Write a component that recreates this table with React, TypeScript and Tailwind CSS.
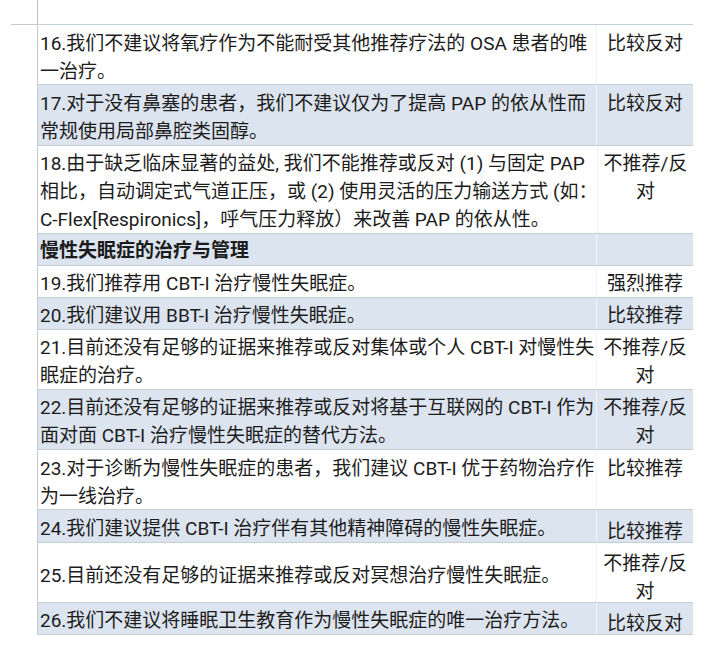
import React from "react";

type Row = {
  lines: string[];
  rec: string[];
  h: string;
  shade?: boolean;
  bold?: boolean;
  pt: string;
  rpt: string;
};

const rows: Row[] = [
  {
    lines: ["16.我们不建议将氧疗作为不能耐受其他推荐疗法的 OSA 患者的唯", "一治疗。"],
    rec: ["比较反对"],
    h: "h-[60px]",
    pt: "pt-[5px]",
    rpt: "pt-[5px]",
  },
  {
    lines: ["17.对于没有鼻塞的患者，我们不建议仅为了提高 PAP 的依从性而", "常规使用局部鼻腔类固醇。"],
    rec: ["比较反对"],
    h: "h-[61px]",
    shade: true,
    pt: "pt-[5px]",
    rpt: "pt-[5px]",
  },
  {
    lines: [
      "18.由于缺乏临床显著的益处, 我们不能推荐或反对 (1) 与固定 PAP",
      "相比，自动调定式气道正压，或 (2) 使用灵活的压力输送方式 (如：",
      "C-Flex[Respironics]，呼气压力释放）来改善 PAP 的依从性。",
    ],
    rec: ["不推荐/反", "对"],
    h: "h-[88px]",
    pt: "pt-[4px]",
    rpt: "pt-[4px]",
  },
  {
    lines: ["慢性失眠症的治疗与管理"],
    rec: [],
    h: "h-[32px]",
    shade: true,
    bold: true,
    pt: "pt-[3px]",
    rpt: "pt-[3px]",
  },
  {
    lines: ["19.我们推荐用 CBT-I 治疗慢性失眠症。"],
    rec: ["强烈推荐"],
    h: "h-[32px]",
    pt: "pt-[4px]",
    rpt: "pt-[4px]",
  },
  {
    lines: ["20.我们建议用 BBT-I 治疗慢性失眠症。"],
    rec: ["比较推荐"],
    h: "h-[32px]",
    shade: true,
    pt: "pt-[4px]",
    rpt: "pt-[4px]",
  },
  {
    lines: ["21.目前还没有足够的证据来推荐或反对集体或个人 CBT-I 对慢性失", "眠症的治疗。"],
    rec: ["不推荐/反", "对"],
    h: "h-[60px]",
    pt: "pt-[4px]",
    rpt: "pt-[4px]",
  },
  {
    lines: ["22.目前还没有足够的证据来推荐或反对将基于互联网的 CBT-I 作为", "面对面 CBT-I 治疗慢性失眠症的替代方法。"],
    rec: ["不推荐/反", "对"],
    h: "h-[60px]",
    shade: true,
    pt: "pt-[4px]",
    rpt: "pt-[4px]",
  },
  {
    lines: ["23.对于诊断为慢性失眠症的患者，我们建议 CBT-I 优于药物治疗作", "为一线治疗。"],
    rec: ["比较推荐"],
    h: "h-[60px]",
    pt: "pt-[5px]",
    rpt: "pt-[5px]",
  },
  {
    lines: ["24.我们建议提供 CBT-I 治疗伴有其他精神障碍的慢性失眠症。"],
    rec: ["比较推荐"],
    h: "h-[33px]",
    shade: true,
    pt: "pt-[5px]",
    rpt: "pt-[8px]",
  },
  {
    lines: ["25.目前还没有足够的证据来推荐或反对冥想治疗慢性失眠症。"],
    rec: ["不推荐/反", "对"],
    h: "h-[60px]",
    pt: "pt-[19px]",
    rpt: "pt-[7px]",
  },
  {
    lines: ["26.我们不建议将睡眠卫生教育作为慢性失眠症的唯一治疗方法。"],
    rec: ["比较反对"],
    h: "h-[32px]",
    shade: true,
    pt: "pt-[4px]",
    rpt: "pt-[7px]",
  },
];

export default function App() {
  return (
    <div className="w-[719px] h-[665px] bg-white overflow-hidden text-[#1c1c1c] font-['Roboto','Noto_Sans_CJK_SC',sans-serif] text-[19px] leading-[28px]">
      <div className="flex h-[24px]">
        <div className="w-[37px]" />
        <div className="w-px bg-[#bdbdbd]" />
      </div>
      <div className="flex">
        <div className="ml-[11px] w-[26px] border-t border-[#c8c8c8]" />
        <div className="w-[656px] border-l border-t border-l-[#c6cad0] border-t-[#c6cdd7]">
          {rows.map((r, i) => (
            <div
              key={i}
              className={`flex overflow-hidden border-b border-[#c6cdd7] ${r.h} ${r.shade ? "bg-[#dce4ef]" : "bg-white"}`}
            >
              <div className={`w-[559px] pl-[2px] whitespace-nowrap ${r.pt} ${r.bold ? "font-bold" : ""}`}>
                {r.lines.map((l, j) => (
                  <div key={j}>{l}</div>
                ))}
              </div>
              <div className={`w-[97px] border-l border-[#f1f4f8] text-center whitespace-nowrap ${r.rpt}`}>
                {r.rec.map((l, j) => (
                  <div key={j}>{l}</div>
                ))}
              </div>
            </div>
          ))}
        </div>
      </div>
    </div>
  );
}
